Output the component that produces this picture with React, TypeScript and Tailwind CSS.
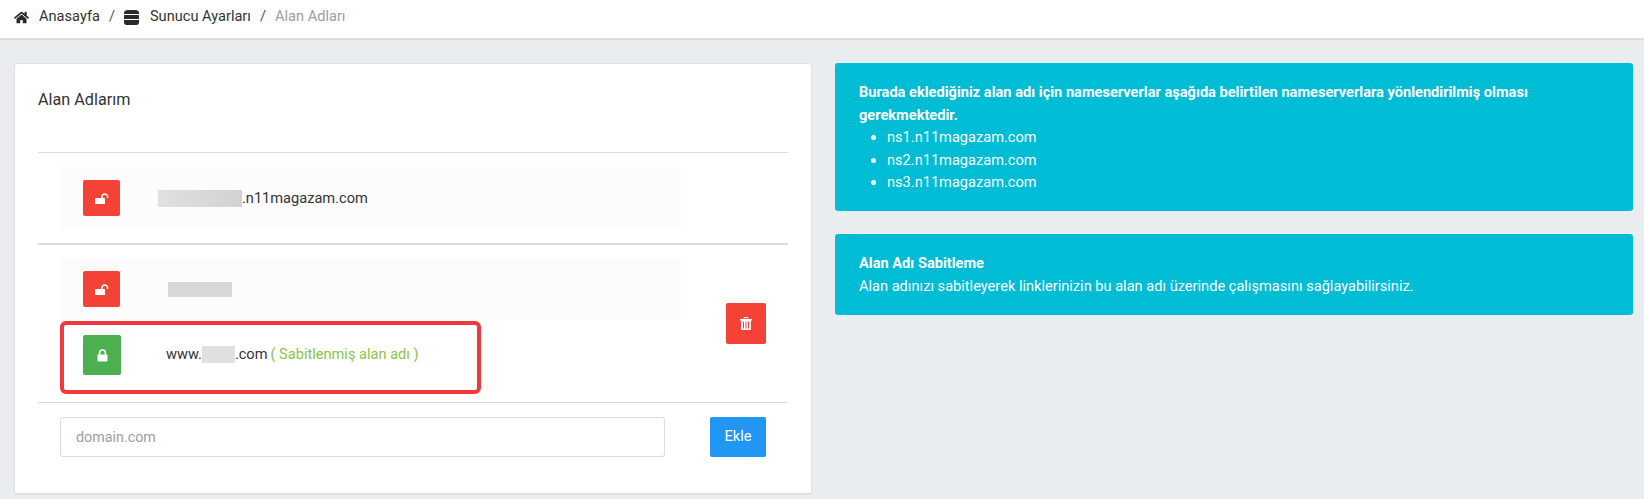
import { FaHome } from "react-icons/fa";

function UnlockIcon() {
  return (
    <svg width="14" height="11" viewBox="0 0 14 11" fill="none">
      <rect x="0" y="5" width="10" height="6" rx="0.5" fill="#fff" />
      <path d="M7 5.5V3.6C7 2.2 8.1 1 9.5 1S12.6 2.2 12.6 3.6V5" stroke="#fff" strokeWidth="1.6" />
    </svg>
  );
}

function LockIcon() {
  return (
    <svg width="11" height="13" viewBox="0 0 11 13" fill="none">
      <rect x="0.5" y="5.5" width="10" height="7" rx="0.8" fill="#fff" />
      <path d="M2.6 6V4C2.6 2.3 3.8 1 5.5 1S8.4 2.3 8.4 4V6" stroke="#fff" strokeWidth="1.6" />
    </svg>
  );
}

function TrashIcon() {
  return (
    <svg width="12" height="13" viewBox="0 0 12 13" fill="none">
      <path d="M4 2V1.2C4 .8 4.3.5 4.7.5H7.3C7.7.5 8 .8 8 1.2V2" stroke="#fff" strokeWidth="1" />
      <rect x="0" y="2" width="12" height="1.4" fill="#fff" />
      <path fillRule="evenodd" clipRule="evenodd" d="M1 3H11V12C11 12.6 10.6 13 10 13H2C1.4 13 1 12.6 1 12V3ZM3 4.5V11.5H4V4.5H3ZM5.5 4.5V11.5H6.5V4.5H5.5ZM8 4.5V11.5H9V4.5H8Z" fill="#fff" />
    </svg>
  );
}

function StackIcon() {
  return (
    <svg width="15" height="15" viewBox="0 0 15 15" fill="#2b2b2b">
      <path d="M4 0H11C13.5 0 15 1.2 15 3V4H0V3C0 1.2 1.5 0 4 0Z" />
      <rect x="0" y="5" width="15" height="4" rx="0.6" />
      <path d="M0 10H15V12.6C15 14 14 15 12.5 15H2.5C1 15 0 14 0 12.6V10Z" />
    </svg>
  );
}

function LockButton({ locked }: { locked?: boolean }) {
  return (
    <div
      className={
        locked
          ? "flex h-10 w-[38px] items-center justify-center rounded-[2px] bg-[#4caf50]"
          : "flex h-9 w-[37px] items-center justify-center rounded-[2px] bg-[#f44336]"
      }
    >
      {locked ? <LockIcon /> : <UnlockIcon />}
    </div>
  );
}

export default function App() {
  return (
    <div className="h-[499px] overflow-hidden bg-[#e9edf0] font-['Roboto',sans-serif] text-[14.6px] text-[#333]">
      <nav className="flex h-10 items-center border-b-2 border-[#dcdcdc] bg-white pl-[14px] pb-[4px]">
        <FaHome className="mr-[10px] text-[15px] text-[#2b2b2b]" />
        <span>Anasayfa</span>
        <span className="mx-[9px] text-[#555]">/</span>
        <StackIcon />
        <span className="ml-[11px]">Sunucu Ayarları</span>
        <span className="mx-[9px] text-[#555]">/</span>
        <span className="text-[#9e9e9e]">Alan Adları</span>
      </nav>

      <div className="flex gap-[23px] pt-[23px] pl-[14px] pr-[11px]">
        <section className="h-[432px] w-[798px] rounded-[4px] border border-[#e0e0e0] border-b-2 bg-white pl-[23px] pr-[23px]">
          <h2 className="pt-[26px] text-[16.2px] leading-[20px] text-[#333]">Alan Adlarım</h2>

          <div className="mt-[42px] border-t border-[#dcdcdc] pt-[14px] pl-[22px]">
            <div className="flex h-[62px] w-[621px] items-center bg-[#fcfcfc] pl-[23px]">
              <LockButton />
              <div className="ml-[38px] mt-[2px] flex items-center">
                <span className="h-[17px] w-[84px] bg-gradient-to-r from-[#e0e0de] to-[#d2d3d2]" />
                <span>.n11magazam.com</span>
              </div>
            </div>
          </div>

          <div className="mt-[14px] flex border-t-2 border-[#dcdcdc] pt-[13px] pl-[22px]">
            <div className="w-[621px]">
              <div className="flex h-[62px] items-center bg-[#fcfcfc] pl-[23px]">
                <LockButton />
                <span className="ml-[48px] h-[15px] w-[64px] bg-[#d8d8d8]" />
              </div>
              <div className="mt-[1px] flex h-[73px] w-[421px] items-center rounded-[6px] border-4 border-[#f0393c] pl-[19px] pb-[5px]">
                <LockButton locked />
                <div className="ml-[45px] flex items-center whitespace-nowrap">
                  <span>www.</span>
                  <span className="h-[17px] w-[33px] bg-[#e0e0e0]" />
                  <span>.com</span>
                  <span className="ml-[3px] text-[#8bc34a]">( Sabitlenmiş alan adı )</span>
                </div>
              </div>
            </div>
            <div className="ml-[45px] mt-[45px] flex h-[41px] w-10 items-center justify-center self-start rounded-[2px] bg-[#f44336]">
              <TrashIcon />
            </div>
          </div>

          <form className="mt-[8px] flex border-t border-[#dcdcdc] pt-[14px] pl-[22px]">
            <input
              placeholder="domain.com"
              className="h-10 w-[605px] rounded-[3px] border border-[#dcdcdc] bg-white px-[15px] text-[14.3px] outline-none placeholder:text-[#9e9e9e]"
            />
            <button
              type="button"
              className="ml-[45px] h-10 w-14 rounded-[2px] bg-[#2196f3] text-[14.6px] text-white"
            >
              Ekle
            </button>
          </form>
        </section>

        <aside className="flex w-[798px] flex-col gap-[23px] text-[14.6px] leading-[22.5px] text-white">
          <div className="h-[148px] rounded-[3px] bg-[#00bcd4] px-[24px] pt-[18px]">
            <p className="font-bold">
              Burada eklediğiniz alan adı için nameserverlar aşağıda belirtilen nameserverlara yönlendirilmiş olması
              gerekmektedir.
            </p>
            <ul className="list-disc pl-[28px]">
              <li>ns1.n11magazam.com</li>
              <li>ns2.n11magazam.com</li>
              <li>ns3.n11magazam.com</li>
            </ul>
          </div>
          <div className="h-[81px] rounded-[3px] bg-[#00bcd4] px-[24px] pt-[18px]">
            <p className="font-bold">Alan Adı Sabitleme</p>
            <p>Alan adınızı sabitleyerek linklerinizin bu alan adı üzerinde çalışmasını sağlayabilirsiniz.</p>
          </div>
        </aside>
      </div>
    </div>
  );
}
